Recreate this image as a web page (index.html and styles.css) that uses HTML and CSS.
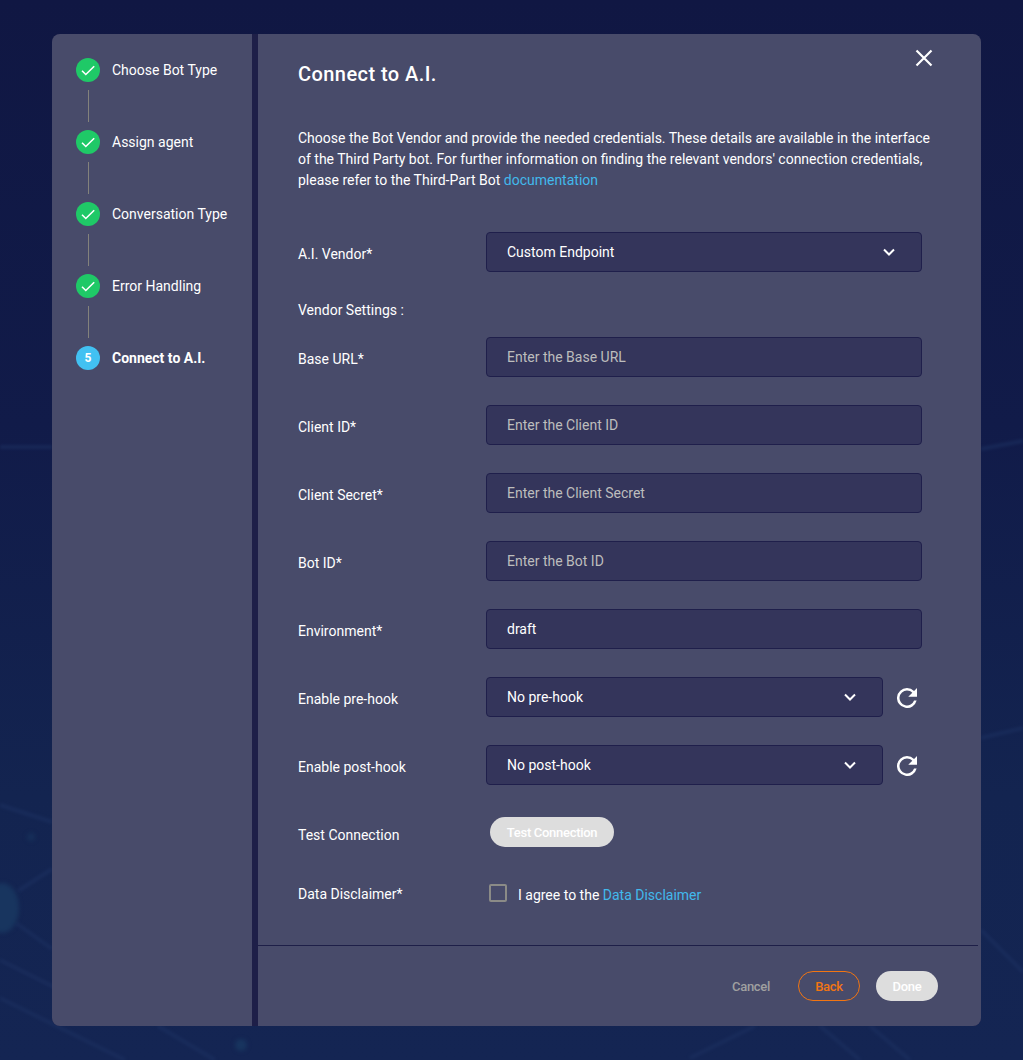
FILE: index.html
```html
<!DOCTYPE html>
<html lang="en">
<head>
<meta charset="utf-8">
<title>Connect to A.I.</title>
<link rel="stylesheet" href="styles.css">
</head>
<body>
<svg class="backdrop" viewBox="0 0 1023 1060" aria-hidden="true">
  <g class="backdrop-lines">
    <path d="M0 447H52M18 891L52 869M16 923L52 949M158 1026L215 1060M0 960L80 1000M0 998L125 1060M0 805L52 822M690 1058L755 1026M981 449L1023 441M981 738L1023 728M981 930L1023 972M820 1026L860 1060M870 1026L910 1060"/>
  </g>
  <ellipse class="backdrop-node" cx="2" cy="908" rx="17" ry="25"/>
  <circle class="backdrop-node" cx="241" cy="1045" r="6"/>
  <circle class="backdrop-dot" cx="31" cy="837" r="4"/>
</svg>
<div class="wizard">
  <aside class="steps">
    <div class="step"><span class="badge"><svg viewBox="0 0 24 24"><path d="M6 12.8l3.800 3.700L18.200 8.200"/></svg></span><span>Choose Bot Type</span></div>
    <div class="connector"></div>
    <div class="step"><span class="badge"><svg viewBox="0 0 24 24"><path d="M6 12.8l3.800 3.700L18.200 8.200"/></svg></span><span>Assign agent</span></div>
    <div class="connector"></div>
    <div class="step"><span class="badge"><svg viewBox="0 0 24 24"><path d="M6 12.8l3.800 3.700L18.200 8.200"/></svg></span><span>Conversation Type</span></div>
    <div class="connector"></div>
    <div class="step"><span class="badge"><svg viewBox="0 0 24 24"><path d="M6 12.8l3.800 3.700L18.200 8.200"/></svg></span><span>Error Handling</span></div>
    <div class="connector"></div>
    <div class="step current"><span class="badge">5</span><span>Connect to A.I.</span></div>
  </aside>
  <main class="panel">
    <header class="panel-head">
      <h1>Connect to A.I.</h1>
      <svg class="close" viewBox="0 0 24 24"><path d="M4.500 4.500l15 15M19.500 4.500l-15 15"/></svg>
    </header>
    <section class="panel-body">
      <p class="intro">Choose the Bot Vendor and provide the needed credentials. These details are available in the interface<br>of the Third Party bot. For further information on finding the relevant vendors' connection credentials,<br>please refer to the Third-Part Bot <a>documentation</a></p>
      <div class="row"><label>A.I. Vendor*</label><div class="field select">Custom Endpoint<svg class="chevron" viewBox="0 0 14 14"><path d="M2 4.500l5 5 5-5"/></svg></div></div>
      <div class="subhead">Vendor Settings :</div>
      <div class="rows">
        <div class="row"><label>Base URL*</label><div class="field hint">Enter the Base URL</div></div>
        <div class="row"><label>Client ID*</label><div class="field hint">Enter the Client ID</div></div>
        <div class="row"><label>Client Secret*</label><div class="field hint">Enter the Client Secret</div></div>
        <div class="row"><label>Bot ID*</label><div class="field hint">Enter the Bot ID</div></div>
        <div class="row"><label>Environment*</label><div class="field">draft</div></div>
        <div class="row"><label>Enable pre-hook</label><div class="field select short">No pre-hook<svg class="chevron" viewBox="0 0 14 14"><path d="M2 4.500l5 5 5-5"/></svg></div><svg class="refresh" viewBox="4 4 16 16"><path d="M17.650 6.350A7.958 7.958 0 0 0 12 4a8 8 0 1 0 7.730 10h-2.080A6 6 0 1 1 12 6c1.660 0 3.140.69 4.220 1.780L13 11h7V4l-2.350 2.350z"/></svg></div>
        <div class="row"><label>Enable post-hook</label><div class="field select short">No post-hook<svg class="chevron" viewBox="0 0 14 14"><path d="M2 4.500l5 5 5-5"/></svg></div><svg class="refresh" viewBox="4 4 16 16"><path d="M17.650 6.350A7.958 7.958 0 0 0 12 4a8 8 0 1 0 7.730 10h-2.080A6 6 0 1 1 12 6c1.660 0 3.140.69 4.220 1.780L13 11h7V4l-2.350 2.350z"/></svg></div>
        <div class="row"><label>Test Connection</label><button class="btn filled test">Test Connection</button></div>
      </div>
      <div class="row agree"><label>Data Disclaimer*</label><span class="checkbox"></span><span class="agree-text">I agree to the <a>Data Disclaimer</a></span></div>
    </section>
    <footer class="panel-foot">
      <button class="btn plain">Cancel</button>
      <button class="btn outline">Back</button>
      <button class="btn filled">Done</button>
    </footer>
  </main>
</div>
</body>
</html>
```
FILE: styles.css
```css
* { box-sizing: border-box; }

body {
  margin: 0;
  height: 1060px;
  padding: 34px 42px 34px 52px;
  overflow: hidden;
  background: linear-gradient(#101743 0, #111b49 40%, #132450 75%, #142553 100%);
  color: #fff;
  font: 14px/21px Roboto, sans-serif;
}

.backdrop { position: absolute; inset: 0; width: 1023px; height: 1060px; z-index: -1; }
.backdrop-lines { fill: none; stroke: #1c3060; stroke-width: 4; opacity: 0.6; filter: blur(1.5px); }
.backdrop-node { fill: #18355f; filter: blur(2px); }
.backdrop-dot { fill: #162f59; filter: blur(2px); }

.wizard {
  display: flex;
  gap: 6px;
  height: 992px;
  background: #1e1f48;
  border-radius: 8px;
  overflow: hidden;
}

.steps { width: 200px; padding: 24px; background: #484b6a; }
.step { display: flex; align-items: center; gap: 12px; height: 24px; white-space: nowrap; }
.badge {
  display: flex;
  align-items: center;
  justify-content: center;
  width: 24px;
  height: 24px;
  border-radius: 50%;
  background: #1fc967;
}
.badge svg { width: 24px; height: 24px; fill: none; stroke: #fff; stroke-width: 1.600; }
.connector { width: 1px; height: 32px; margin: 8px 0 8px 12px; background: #83827c; }
.current { font-weight: 700; }
.current .badge { background: #42c1f2; font-size: 12px; }

.panel { flex: 1; display: flex; flex-direction: column; background: #484b6a; }
.panel-head { display: flex; justify-content: space-between; height: 94px; padding: 0 45px 0 40px; }
h1 { margin: 28px 0 0; font-size: 20px; line-height: 24px; font-weight: 500; letter-spacing: 0.44px; }
.close { width: 24px; height: 24px; margin-top: 12px; fill: none; stroke: #fff; stroke-width: 2.200; }

.panel-body { height: 817px; padding-left: 40px; }
.intro { margin: 0 0 41px; white-space: nowrap; }
a { color: #42b9ec; }

.row { display: flex; align-items: center; height: 40px; }
.rows { display: grid; gap: 28px; }
.row label { width: 188px; padding-top: 4px; }
.field {
  display: flex;
  align-items: center;
  justify-content: space-between;
  width: 436px;
  height: 40px;
  padding: 0 25px 0 20px;
  border: 1px solid #1f1f4b;
  border-radius: 4px;
  background: #34355b;
}
.short { width: 397px; }
.hint { color: #bdbdbd; }
.chevron { width: 14px; height: 14px; fill: none; stroke: #fff; stroke-width: 2; }
.refresh { width: 20px; height: 20px; margin: 2px 0 0 14px; fill: #fff; }
.subhead { margin: 28px 0 16px; }

.btn {
  height: 30px;
  padding: 2px 0 0;
  border: 0;
  border-radius: 15px;
  background: none;
  color: #fff;
  font: 500 13px/28px Roboto, sans-serif;
  letter-spacing: -0.3px;
}
.filled { width: 62px; background: #ddd; }
.test { width: 124px; margin: -2px 0 0 4px; }
.plain { color: #a0a0a0; }
.outline { width: 62px; border: 1px solid #f27512; color: #f27512; line-height: 26px; }

.agree { margin-top: 19px; }
.checkbox { width: 18px; height: 18px; margin: 2px 11px 0 3px; border: 2px solid #8b8b87; border-radius: 2px; }
.agree-text { padding-top: 6px; }

.panel-foot {
  display: flex;
  justify-content: flex-end;
  gap: 16px;
  width: 720px;
  height: 81px;
  padding: 25px 40px 0 0;
  border-top: 1px solid #1e1f48;
}
.plain { margin-right: 12px; }
```
